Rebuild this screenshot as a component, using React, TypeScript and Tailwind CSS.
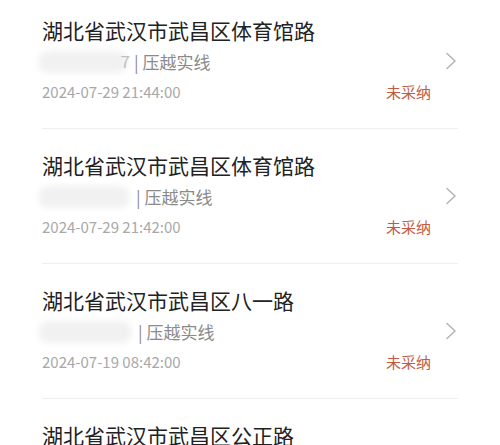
const rows = [
  { title: '湖北省武汉市武昌区体育馆路', time: '2024-07-29 21:44:00', blob: 'w-[90px]', frag: '7' },
  { title: '湖北省武汉市武昌区体育馆路', time: '2024-07-29 21:42:00', blob: 'w-[92px]', frag: '' },
  { title: '湖北省武汉市武昌区八一路', time: '2024-07-19 08:42:00', blob: 'w-[94px]', frag: '' },
  { title: '湖北省武汉市武昌区公正路', time: '2024-07-19 08:30:00', blob: 'w-[92px]', frag: '' },
];

function Chevron() {
  return (
    <svg width="13" height="18" viewBox="0 0 13 18" fill="none" className="shrink-0 -ml-[1px]">
      <path d="M2 1.5 L10 9 L2 16.5" stroke="#b0b0b0" strokeWidth="1.4" strokeLinecap="round" strokeLinejoin="round" />
    </svg>
  );
}

export default function App() {
  return (
    <div
      className="w-[500px] h-[445px] overflow-hidden bg-white"
      style={{ fontFamily: '"Noto Sans CJK SC", "Noto Sans", sans-serif' }}
    >
      <div className="mx-[42px] -mt-[6px]">
        {rows.map((r, i) => (
          <div
            key={i}
            className="flex items-center border-b border-[#eeeeee] pt-[21px] pb-[21px]"
          >
            <div className="flex-1 min-w-0 mr-[13px]">
              <div className="h-[30px] leading-[30px] text-[21px] text-[#222222] whitespace-nowrap">
                {r.title}
              </div>
              <div className="mt-[2px] h-[30px] flex items-center text-[17px] text-[#8a8a8a]">
                <span className={`relative ${r.blob} h-[24px] shrink-0`}>
                  <span className="absolute -left-[4px] top-[1px] w-full h-[22px] rounded-full bg-[#f1f1f1] blur-[3px]" />
                  {r.frag && (
                    <span className="absolute right-[2px] top-[-4px] text-[#c0c0c0] leading-[30px]">{r.frag}</span>
                  )}
                </span>
                <span className="ml-[2px]">|&nbsp;压越实线</span>
              </div>
              <div className="h-[30px] flex items-center justify-between text-[15px]">
                <span className="text-[#a8a8a8]">{r.time}</span>
                <span className="text-[#c25a42] mr-[2px]">未采纳</span>
              </div>
            </div>
            <Chevron />
          </div>
        ))}
      </div>
    </div>
  );
}
